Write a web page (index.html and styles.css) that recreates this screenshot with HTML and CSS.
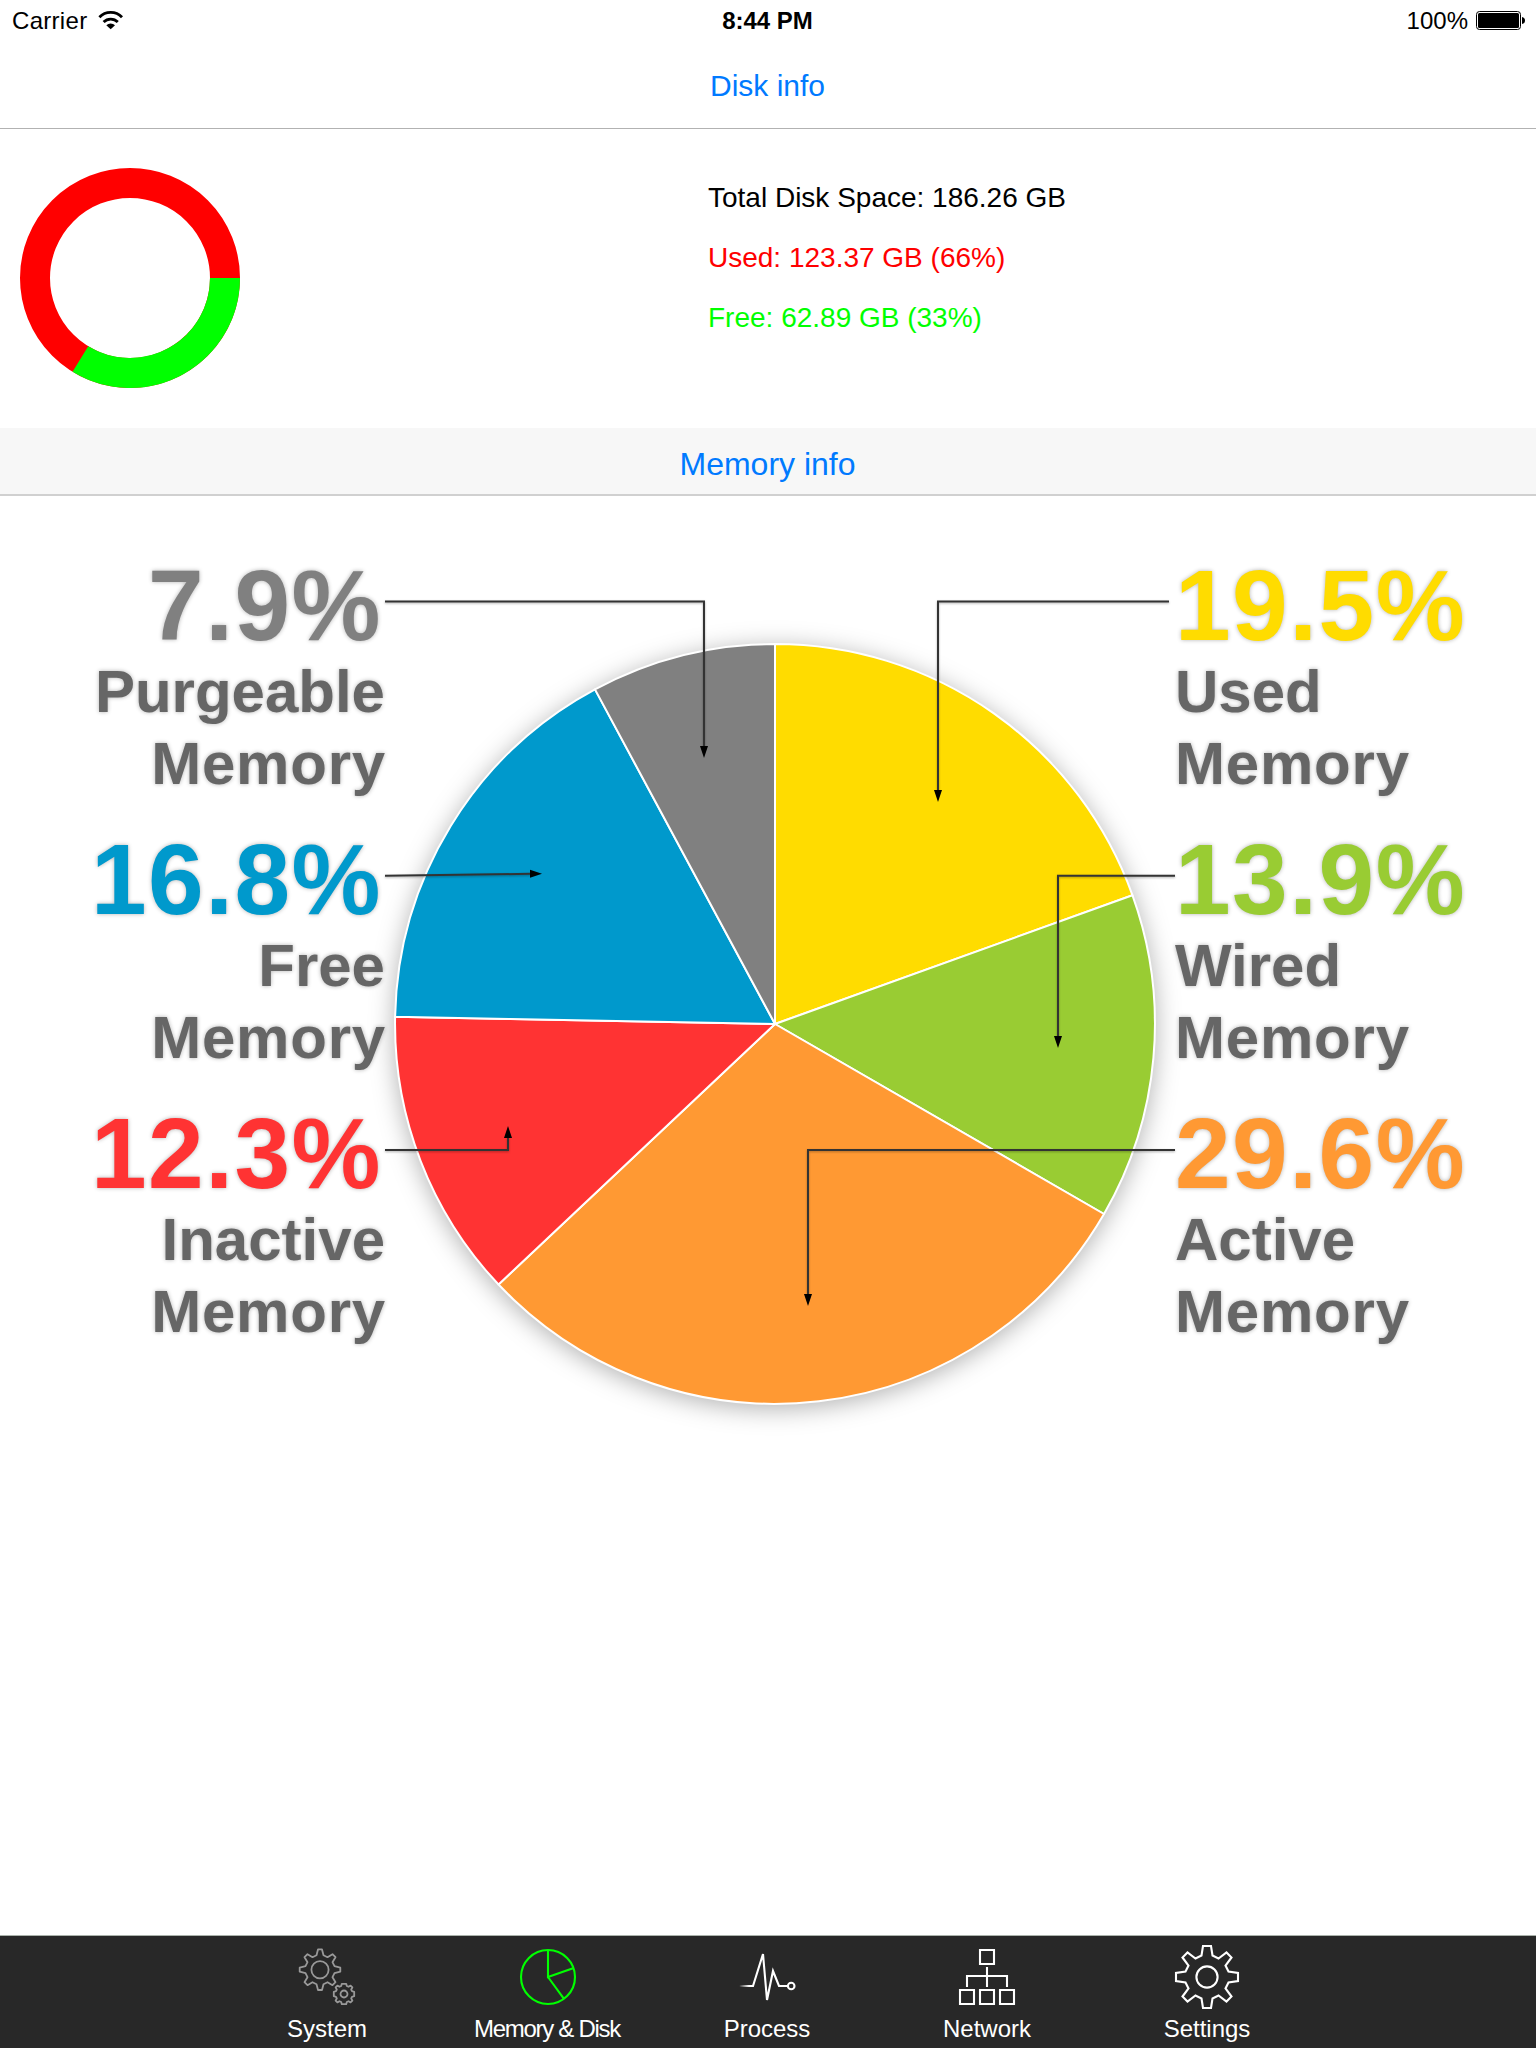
FILE: index.html
```html
<!DOCTYPE html>
<html lang="en">

<head>
    <meta charset="UTF-8">
    <meta name="viewport" content="width=device-width, initial-scale=1.0">
    <title>Memory &amp; Disk</title>
    <link rel="stylesheet" href="styles.css">
</head>

<body>
    <header class="status-bar">
        <div class="status-left">
            <span class="carrier">Carrier</span>
            <svg class="wifi" width="26" height="20" viewBox="98 10 26 20">
                <path d="M99.4 17.3A15.5 15.5 0 0 1 122 17.3M103.6 22A10 10 0 0 1 117.8 22" fill="none" stroke="#000" stroke-width="2.8"/>
                <path d="M106.3 25.2A6.5 6.5 0 0 1 115 25.2L110.7 29.2Z"/>
            </svg>
        </div>
        <div class="status-time">8:44 PM</div>
        <div class="status-right">
            <span>100%</span>
            <svg class="battery" width="49" height="19" viewBox="0 0 49 19">
                <rect x="0.5" y="0.5" width="44" height="18" rx="3" fill="#fff" stroke="#000"/>
                <rect x="2" y="2" width="41" height="15" rx="1.5"/>
                <path d="M46 6Q49 6.5 49 9.5T46 13Z"/>
            </svg>
        </div>
    </header>

    <h1 class="section-title disk-title">Disk info</h1>

    <section class="disk">
        <svg class="disk-chart" width="220" height="220" viewBox="-110 -110 220 220">
            <circle r="95" fill="none" stroke="#f00" stroke-width="30"/>
            <path d="M95 0A95 95 0 0 1 -49.6 81" fill="none" stroke="#0f0" stroke-width="30"/>
        </svg>
        <div class="disk-text">
            <p>Total Disk Space: 186.26 GB</p>
            <p class="disk-used">Used: 123.37 GB (66%)</p>
            <p class="disk-free">Free: 62.89 GB (33%)</p>
        </div>
    </section>

    <h2 class="section-title memory-title">Memory info</h2>

    <section class="memory">
        <div class="labels labels-left">
            <div class="label">
                <div class="percent gray">7.9%</div>
                <div class="name">Purgeable<br><span class="wide">Memory</span></div>
            </div>
            <div class="label">
                <div class="percent blue">16.8%</div>
                <div class="name">Free<br><span class="wide">Memory</span></div>
            </div>
            <div class="label">
                <div class="percent red">12.3%</div>
                <div class="name">Inactive<br><span class="wide">Memory</span></div>
            </div>
        </div>

        <svg class="pie" width="790" height="940" viewBox="385 496 790 940">
            <g class="slices">
                <path fill="#ffdc00" d="M775 1024V644A380 380 0 0 1 1132.5 895.3Z"/>
                <path fill="#9c3" d="M775 1024L1132.5 895.3A380 380 0 0 1 1104 1214Z"/>
                <path fill="#f93" d="M775 1024L1104 1214A380 380 0 0 1 498.5 1284.5Z"/>
                <path fill="#f33" d="M775 1024L498.5 1284.5A380 380 0 0 1 395.1 1016.8Z"/>
                <path fill="#09c" d="M775 1024L395.1 1016.8A380 380 0 0 1 595 689.4Z"/>
                <path fill="#808080" d="M775 1024L595 689.4A380 380 0 0 1 775 644Z"/>
            </g>
            <g class="pointers">
                <path d="M385 601.5H704V747"/>
                <path d="M385 875.8L531 873.8"/>
                <path d="M385 1150H508V1137"/>
                <path d="M1169 601.5H938V791"/>
                <path d="M1175 875.8H1058V1037"/>
                <path d="M1175 1150H808V1295"/>
            </g>
            <g class="arrows">
                <path d="M700 746h8l-4 12z"/>
                <path d="M530 869.8v8l12-4z"/>
                <path d="M504 1138h8l-4-12z"/>
                <path d="M934 790h8l-4 12z"/>
                <path d="M1054 1036h8l-4 12z"/>
                <path d="M804 1294h8l-4 12z"/>
            </g>
        </svg>

        <div class="labels labels-right">
            <div class="label">
                <div class="percent yellow">19.5%</div>
                <div class="name">Used<br><span class="wide">Memory</span></div>
            </div>
            <div class="label">
                <div class="percent green">13.9%</div>
                <div class="name">Wired<br><span class="wide">Memory</span></div>
            </div>
            <div class="label">
                <div class="percent orange">29.6%</div>
                <div class="name">Active<br><span class="wide">Memory</span></div>
            </div>
        </div>
    </section>

    <nav class="tab-bar">
        <div class="tab">
            <svg class="icon icon-system" width="66" height="66" viewBox="-33 -33 66 66">
                <g transform="translate(-7 -7.3)">
                    <path d="M-2-20.3H2L3.5-14.5 7.5-12.5 12.5-15.5 15.5-12.5 12.5-7.5 14.5-3.5 20.3-2V2L14.5 3.5 12.5 7.5 15.5 12.5 12.5 15.5 7.5 12.5 3.5 14.5 2 20.3H-2L-3.5 14.5-7.5 12.5-12.5 15.5-15.5 12.5-12.5 7.5-14.5 3.5-20.3 2V-2L-14.5-3.5-12.5-7.5-15.5-12.5-12.5-15.5-7.5-12.5-3.5-14.5Z"/>
                    <circle r="8.6"/>
                </g>
                <g transform="translate(17 17)">
                    <path d="M-2.2-10.2H2.2L2.8-8 4.5-7.2 6.6-8.4 8.4-6.6 7.2-4.5 8-2.8 10.2-2.2V2.2L8 2.8 7.2 4.5 8.4 6.6 6.6 8.4 4.5 7.2 2.8 8 2.2 10.2H-2.2L-2.8 8-4.5 7.2-6.6 8.4-8.4 6.6-7.2 4.5-8 2.8-10.2 2.2V-2.2L-8-2.8-7.2-4.5-8.4-6.6-6.6-8.4-4.5-7.2-2.8-8Z"/>
                    <circle r="3.5"/>
                </g>
            </svg>
            <span>System</span>
        </div>
        <div class="tab">
            <svg class="icon icon-memory" width="66" height="66" viewBox="-34 -33 66 66">
                <circle r="27"/>
                <path d="M0-27V0L25-8.7M0 0L15.8 21.7"/>
            </svg>
            <span class="tight">Memory &amp; Disk</span>
        </div>
        <div class="tab">
            <svg class="icon icon-process" width="66" height="66" viewBox="-33 -33 66 66">
                <defs>
                    <linearGradient id="fade" gradientUnits="userSpaceOnUse" x1="-28" y1="0" x2="-18" y2="0">
                        <stop offset="0" stop-color="#fff" stop-opacity="0"/>
                        <stop offset="1" stop-color="#fff"/>
                    </linearGradient>
                </defs>
                <path stroke="url(#fade)" d="M-27.5 9H-14L-4-23 0 23 6-6 12 9H20.5"/>
                <circle cx="24.2" cy="9" r="3.3"/>
            </svg>
            <span>Process</span>
        </div>
        <div class="tab">
            <svg class="icon" width="66" height="66" viewBox="-33 -33 66 66">
                <path d="M-7-27H7V-13H-7ZM-27 13H-13V27H-27ZM-7 13H7V27H-7ZM13 13H27V27H13ZM0-10V10M-20 10V-1H20V10"/>
            </svg>
            <span>Network</span>
        </div>
        <div class="tab">
            <svg class="icon" width="66" height="66" viewBox="-33 -33 66 66">
                <path d="M-4-31H4L5.5-21.5 11.5-18.5 19.5-24.5 24.5-19.5 18.5-11.5 21.5-5.5 31-4V4L21.5 5.5 18.5 11.5 24.5 19.5 19.5 24.5 11.5 18.5 5.5 21.5 4 31H-4L-5.5 21.5-11.5 18.5-19.5 24.5-24.5 19.5-18.5 11.5-21.5 5.5-31 4V-4L-21.5-5.5-18.5-11.5-24.5-19.5-19.5-24.5-11.5-18.5-5.5-21.5Z"/>
                <circle r="10.6"/>
            </svg>
            <span>Settings</span>
        </div>
    </nav>
</body>

</html>
```

FILE: styles.css
```css
* {
    box-sizing: border-box;
}

body {
    font-family: "Liberation Sans", Arial, sans-serif;
    margin: 0;
    height: 2048px;
    display: flex;
    flex-direction: column;
    background-color: #fff;
    color: #000;
}

.status-bar {
    display: grid;
    grid-template-columns: 1fr auto 1fr;
    height: 40px;
    padding: 0 11px 0 12px;
    font-size: 24px;
    line-height: 41px;
}

.status-left,
.status-right {
    display: flex;
}

.status-right {
    justify-content: flex-end;
}

.carrier {
    letter-spacing: 0.3px;
}

.status-time {
    padding-right: 2px;
    font-weight: bold;
}

.wifi {
    margin: 10px 0 0 11px;
}

.battery {
    margin: 11px 0 0 8px;
}

.section-title {
    margin: 0;
    padding-right: 1px;
    text-align: center;
    font-weight: normal;
    color: #007aff;
}

.disk-title {
    height: 89px;
    font-size: 30px;
    line-height: 91px;
    border-bottom: 1px solid #b2b2b2;
}

.memory-title {
    height: 68px;
    font-size: 32px;
    line-height: 73px;
    background-color: #f7f7f7;
    border-bottom: 2px solid #d0d0d0;
}

.disk {
    display: flex;
    height: 299px;
    padding: 39px 20px 0;
}

.disk-text {
    margin-left: 468px;
    font-size: 28px;
    line-height: 60px;
}

.disk-text p {
    margin: 0;
}

.disk-used {
    color: #f00;
}

.disk-free {
    color: #0f0;
}

.memory {
    display: grid;
    grid-template-columns: 385px 790px 1fr;
    flex: 1;
}

.labels {
    display: flex;
    flex-direction: column;
    gap: 30px;
    padding-top: 59px;
    font-weight: bold;
    text-shadow: 0 0 4px rgba(0, 0, 0, 0.3);
}

.labels-left {
    align-items: flex-end;
    text-align: right;
}

.percent {
    font-size: 100px;
    line-height: 100px;
    letter-spacing: 1.5px;
}

.labels-left .percent {
    margin-right: 3px;
}

.name {
    padding-top: 1px;
    margin-bottom: -1px;
    font-size: 60px;
    line-height: 72px;
    color: #666;
}

.wide {
    letter-spacing: 0.8px;
}

.labels-left .wide {
    margin-right: -1px;
}

.gray {
    color: #808080;
}

.blue {
    color: #09c;
}

.red {
    color: #f33;
}

.yellow {
    color: #ffdc00;
}

.green {
    color: #9c3;
}

.orange {
    color: #f93;
}

.pie {
    overflow: visible;
}

.slices {
    stroke: #fff;
    stroke-width: 2;
    stroke-linejoin: round;
    filter: drop-shadow(0 4px 12px rgba(0, 0, 0, 0.3));
}

.pointers {
    fill: none;
    stroke: #333;
    stroke-width: 2;
    filter: drop-shadow(0 1px 1px rgba(0, 0, 0, 0.3));
}

.tab-bar {
    display: flex;
    height: 113px;
    padding-left: 217px;
    background-color: #282828;
    border-top: 1px solid #aab2ab;
    color: #fff;
}

.tab {
    display: flex;
    flex-direction: column;
    align-items: center;
    width: 220px;
    padding-top: 8px;
    font-size: 24px;
    line-height: 38px;
}

.tight {
    letter-spacing: -1.3px;
}

.icon {
    fill: none;
    stroke: #fff;
    stroke-width: 2.1;
}

.icon-system {
    stroke: #999;
    stroke-width: 1.8;
    stroke-linejoin: round;
}

.icon-memory {
    stroke: #0f0;
}
```
